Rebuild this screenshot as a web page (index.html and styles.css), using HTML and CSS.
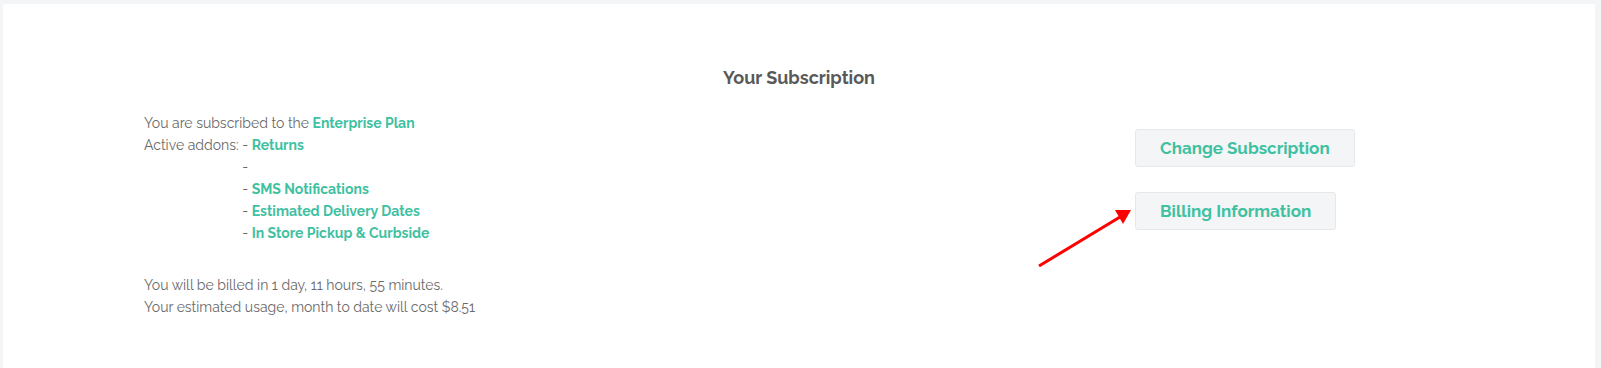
FILE: index.html
```html
<!DOCTYPE html>
<html>
<head>
<meta charset="utf-8">
<title>Your Subscription</title>
<link rel="stylesheet" href="styles.css">
</head>
<body>
<div class="card">
  <h2 class="title">Your Subscription</h2>
  <div class="content">
    <div class="details">
      <p>You are subscribed to the <b class="hl">Enterprise Plan</b></p>
      <div class="addons">
        <span class="label">Active addons:&nbsp;</span>
        <ul>
          <li>- <b class="hl">Returns</b></li>
          <li>-</li>
          <li>- <b class="hl">SMS Notifications</b></li>
          <li>- <b class="hl">Estimated Delivery Dates</b></li>
          <li>- <b class="hl">In Store Pickup &amp; Curbside</b></li>
        </ul>
      </div>
      <div class="billing">
        <p>You will be billed in 1 day, 11 hours, 55 minutes.</p>
        <p>Your estimated usage, month to date will cost $8.51</p>
      </div>
    </div>
    <div class="actions">
      <button class="btn">Change Subscription</button>
      <button class="btn">Billing Information</button>
    </div>
  </div>
  <svg class="arrow" width="100" height="64" viewBox="0 0 100 64">
    <line x1="2" y1="60" x2="83" y2="11" stroke="#ff0000" stroke-width="3"/>
    <polygon points="94,4 78,4 86,18" fill="#ff0000"/>
  </svg>
</div>
</body>
</html>
```
FILE: styles.css
```css
* {
  margin: 0;
  padding: 0;
  box-sizing: border-box;
}
body {
  background: #f4f5f7;
  font-family: Raleway, Lato, "Open Sans", sans-serif;
  color: #6a6a6a;
  font-size: 14px;
}
.card {
  position: relative;
  background: #fff;
  margin: 4px 6px 0 3px;
  min-height: 420px;
  padding-top: 62px;
}
.title {
  text-align: center;
  font-size: 18px;
  font-weight: bold;
  color: #595959;
  line-height: 24px;
}
.content {
  display: grid;
  grid-template-columns: 991px auto;
  padding-left: 141px;
  margin-top: 22px;
}
.details {
  line-height: 22px;
}
.hl {
  color: #3fc1a1;
  font-weight: bold;
}
.addons {
  display: flex;
}
.addons ul {
  list-style: none;
}
.billing {
  margin-top: 30px;
}
.actions {
  display: flex;
  flex-direction: column;
  align-items: flex-start;
  gap: 25px;
  padding-top: 17px;
}
.btn {
  font-family: inherit;
  font-size: 17px;
  font-weight: bold;
  color: #3fc1a1;
  background: #f4f5f7;
  border: 1px solid #e6e7e9;
  border-radius: 3px;
  height: 38px;
  padding: 0 24px;
}
.arrow {
  position: absolute;
  left: 1034px;
  top: 202px;
}
```
